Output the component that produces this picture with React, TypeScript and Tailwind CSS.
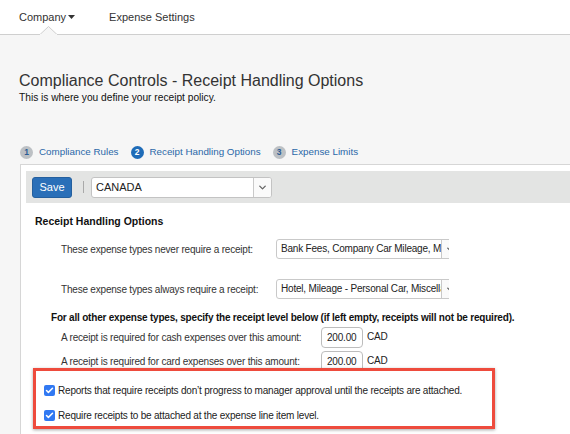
import { Check, ChevronDown } from "lucide-react";

function Chevron() {
  return (
    <span className="w-[18px] h-full flex items-center justify-center border-l border-[#c9c9c9] bg-[#fafafa] shrink-0">
      <ChevronDown className="w-[11px] h-[11px] text-[#666]" strokeWidth={3} />
    </span>
  );
}

function ClippedSelect({ value }: { value: string }) {
  return (
    <div className="w-[173px] h-[20px] overflow-hidden shrink-0">
      <div className="w-[184px] h-[20px] flex border border-[#c9c9c9] rounded-[3px] bg-white overflow-hidden">
        <span className="w-[164px] pl-[4px] leading-[18px] whitespace-nowrap overflow-hidden text-[#222]">{value}</span>
        <Chevron />
      </div>
    </div>
  );
}

function Amount({ label }: { label: string }) {
  return (
    <div className="flex items-center h-[21px] mt-[3px]">
      <span className="w-[286px] pl-[26px] whitespace-nowrap text-[#333]">{label}</span>
      <span className="w-[42px] h-[21px] border border-[#bdbdbd] rounded-[4px] bg-white pl-[5px] leading-[19px] text-[#222]">200.00</span>
      <span className="ml-[4px] -mt-[3px] text-[#222]">CAD</span>
    </div>
  );
}

function Checkbox({ label }: { label: string }) {
  return (
    <div className="flex items-center gap-[3px] h-[13px]">
      <span className="w-[11px] h-[11px] rounded-[2px] bg-[#3179f2] flex items-center justify-center shrink-0">
        <Check className="w-[9px] h-[9px] text-white" strokeWidth={4} />
      </span>
      <span className="whitespace-nowrap text-[#222]">{label}</span>
    </div>
  );
}

const steps = [
  { n: "1", label: "Compliance Rules", active: false },
  { n: "2", label: "Receipt Handling Options", active: true },
  { n: "3", label: "Expense Limits", active: false },
];

export default function App() {
  return (
    <div className="w-[570px] h-[434px] overflow-hidden bg-[#f6f6f6] font-['Liberation_Sans',Arial,sans-serif]">
      <div className="relative h-[35px] bg-white border-b border-[#cfcfcf] flex items-center pl-[19px] gap-[34px] text-[11px] text-[#333]">
        <span className="flex items-center gap-[2px]">
          Company
          <svg width="7" height="4" viewBox="0 0 7 4"><path d="M0 0h7L3.5 4z" fill="#333" /></svg>
        </span>
        <span>Expense Settings</span>
        <svg className="absolute left-[40px] bottom-[-1px]" width="17" height="9" viewBox="0 0 17 9">
          <path d="M0 8.5L8.5 0.5L17 8.5" fill="#f6f6f6" stroke="#cfcfcf" />
          <rect x="0" y="8" width="17" height="1" fill="#f6f6f6" />
        </svg>
      </div>

      <div className="pl-[19px]">
        <h1 className="mt-[36px] text-[16px] leading-[20px] text-[#333]">Compliance Controls - Receipt Handling Options</h1>
        <p className="text-[10.2px] leading-[13px] text-[#111]">This is where you define your receipt policy.</p>

        <div className="mt-[41px] flex items-center h-[14px] pl-[1px] text-[9.8px] text-[#2b68a8]">
          {steps.map((s) => (
            <div key={s.n} className="flex items-center mr-[12px]">
              <span
                className={
                  s.active
                    ? "w-[13px] h-[13px] rounded-full bg-[#1f6cb8] text-white text-[8.5px] font-bold flex items-center justify-center"
                    : "w-[13px] h-[13px] rounded-full bg-[#bcc0c4] text-[#2b5c94] text-[8.5px] font-bold flex items-center justify-center"
                }
              >
                {s.n}
              </span>
              <span className="ml-[6px]">{s.label}</span>
            </div>
          ))}
        </div>
      </div>

      <div className="mt-[5px] ml-[20px] border-l border-t border-[#d6d6d6] bg-white pt-[6px] pl-[5px] h-[300px] text-[10px] tracking-[-0.2px]">
        <div className="h-[32px] bg-[#e3e4e3] flex items-center pl-[6px] tracking-normal">
          <button className="w-[40px] h-[21px] rounded-[3px] bg-[#2a6fb8] border border-[#245f9e] text-white text-[11px]">Save</button>
          <span className="ml-[11px] w-px h-[12px] bg-[#a9a9a9]" />
          <div className="ml-[7px] w-[181px] h-[21px] flex border border-[#c3c3c3] rounded-[3px] bg-white overflow-hidden">
            <span className="flex-1 px-[4px] leading-[19px] text-[11px] text-[#222]">CANADA</span>
            <Chevron />
          </div>
        </div>

        <div className="pl-[9px]">
          <h2 className="mt-[12px] font-bold text-[10.5px] leading-[13px] tracking-normal text-[#111]">Receipt Handling Options</h2>

          <div className="mt-[11px] flex items-center h-[20px]">
            <span className="w-[241px] pl-[26px] text-[#333]">These expense types never require a receipt:</span>
            <ClippedSelect value="Bank Fees, Company Car Mileage, Meals" />
          </div>
          <div className="mt-[20px] flex items-center h-[20px]">
            <span className="w-[241px] pl-[26px] text-[#333]">These expense types always require a receipt:</span>
            <ClippedSelect value="Hotel, Mileage - Personal Car, Miscellaneous" />
          </div>

          <p className="mt-[12px] pl-[16px] font-bold leading-[13px] whitespace-nowrap text-[#111]">
            For all other expense types, specify the receipt level below (if left empty, receipts will not be required).
          </p>

          <Amount label="A receipt is required for cash expenses over this amount:" />
          <Amount label="A receipt is required for card expenses over this amount:" />

          <div className="relative z-10 mt-[-4px] ml-[-2px] w-[462px] h-[61px] border-[3px] border-[#ee4b3d] bg-white shadow-[0_1px_3px_rgba(0,0,0,0.35)] pt-[13px] pl-[8px] flex flex-col gap-[12px]">
            <Checkbox label="Reports that require receipts don’t progress to manager approval until the receipts are attached." />
            <Checkbox label="Require receipts to be attached at the expense line item level." />
          </div>
        </div>
      </div>
    </div>
  );
}
